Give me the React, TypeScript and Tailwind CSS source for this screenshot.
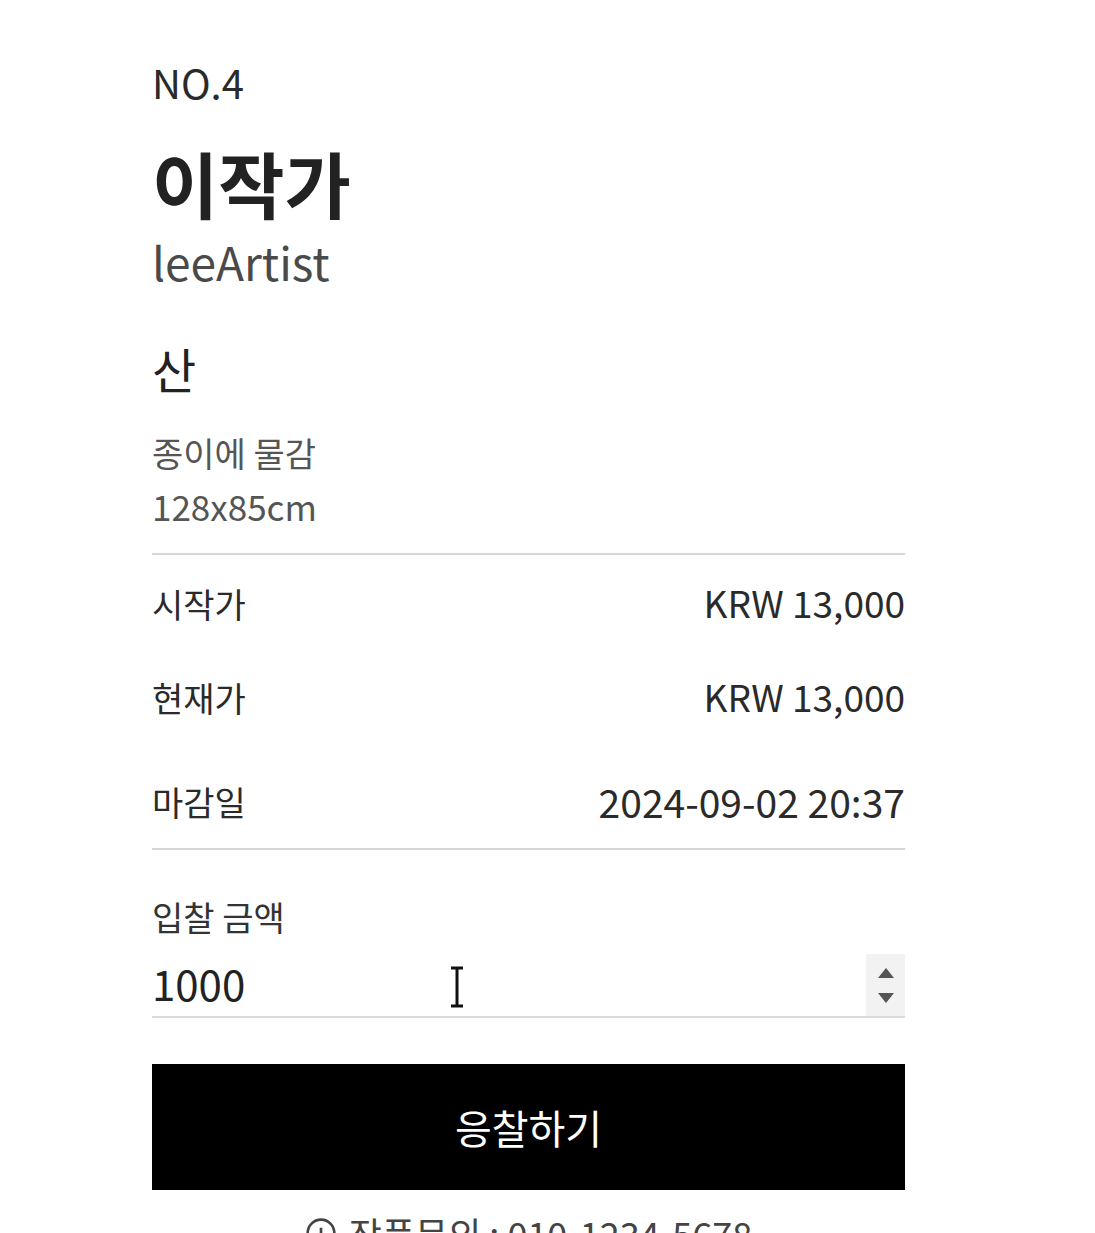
const font = { fontFamily: '"Noto Sans CJK KR", "Noto Sans", sans-serif' };

type RowProps = { label: string; value: string; valueSize?: string; className?: string };

function InfoRow({ label, value, valueSize = "text-[37px]", className = "" }: RowProps) {
  return (
    <div className={`flex h-[50px] items-center justify-between ${className}`}>
      <span className="text-[34px] text-[#2a2a2a]">{label}</span>
      <span className={`${valueSize} text-[#2a2a2a]`}>{value}</span>
    </div>
  );
}

export default function App() {
  return (
    <div className="h-[1233px] w-full overflow-hidden bg-white" style={font}>
      <div className="ml-[152px] w-[753px] pt-[54px]">
        {/* artist */}
        <div className="text-[40px] leading-[56px] text-[#2a2a2a]">NO.4</div>
        <h1 className="mt-[34px] text-[72px] font-bold leading-[76px] text-[#222]">
          이작가
        </h1>
        <div className="mt-[11px] text-[46px] leading-[60px] text-[#4a4a4a]">
          leeArtist
        </div>

        {/* artwork */}
        <div className="mt-[47px] text-[48px] leading-[60px] text-[#222]">산</div>
        <div className="mt-[30px] text-[34px] leading-[50px] text-[#555]">
          종이에 물감
        </div>
        <div className="text-[35px] leading-[56px] text-[#555]">128x85cm</div>

        {/* prices */}
        <div className="mt-[19px] border-t-2 border-[#d6d6d6] pt-[23px] pb-[22px]">
          <InfoRow label="시작가" value="KRW 13,000" />
          <InfoRow label="현재가" value="KRW 13,000" className="mt-[44px]" />
          <InfoRow
            label="마감일"
            value="2024-09-02 20:37"
            valueSize="text-[39px]"
            className="mt-[54px]"
          />
        </div>

        {/* bid */}
        <div className="border-t-2 border-[#d6d6d6] pt-[42px]">
          <div className="text-[34px] leading-[50px] text-[#333]">입찰 금액</div>
          <div className="relative mt-[12px] flex h-[64px] items-center border-b-2 border-[#dcdcdc]">
            <span className="mb-[6px] flex-1 text-[42px] text-[#222]">1000</span>
            {/* text cursor */}
            <svg
              className="absolute left-[295px] top-[12px]"
              width="20"
              height="42"
              viewBox="0 0 20 42"
            >
              <path d="M4 2h12M10 2v38M4 40h12" stroke="#111" strokeWidth="3" fill="none" />
            </svg>
            <div className="flex h-full w-[39px] flex-col items-center justify-center gap-[13px] bg-[#f2f2f2]">
              <svg width="18" height="12" viewBox="0 0 18 12">
                <path d="M9 1L17 11H1z" fill="#555" />
              </svg>
              <svg width="18" height="12" viewBox="0 0 18 12">
                <path d="M1 1h16L9 11z" fill="#555" />
              </svg>
            </div>
          </div>
        </div>

        <button className="mt-[46px] flex h-[126px] w-full items-center justify-center bg-black text-[40px] text-white">
          응찰하기
        </button>

        <div className="mt-[16px] flex items-center justify-center gap-[12px] text-[36px] text-[#444]">
          <svg width="32" height="32" viewBox="0 0 24 24" fill="none" stroke="#444" strokeWidth="2">
            <circle cx="12" cy="12" r="10" />
            <path d="M12 8v4M12 16h.01" />
          </svg>
          <span>작품문의 : 010-1234-5678</span>
        </div>
      </div>
    </div>
  );
}
